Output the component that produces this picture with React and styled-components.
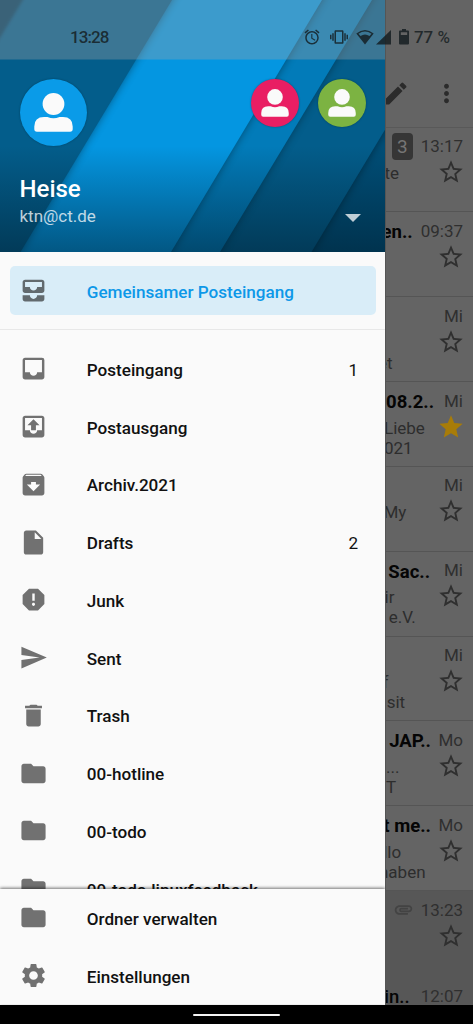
import React from 'react'
import styled, { createGlobalStyle } from 'styled-components'
import {
  MdInbox,
  MdArchive,
  MdInsertDriveFile,
  MdReport,
  MdSend,
  MdDelete,
  MdFolder,
  MdSettings,
  MdStar,
  MdStarBorder,
  MdMoreVert,
  MdEdit,
  MdAttachment,
  MdAlarm,
  MdVibration,
} from 'react-icons/md'

const GlobalStyle = createGlobalStyle`
* {
  box-sizing: border-box;
}
body {
  margin: 0;
  background: #000;
  font-family: Roboto, "Liberation Sans", sans-serif;
}
`

const Screen = styled.div`
  position: relative;
  width: 473px;
  height: 1024px;
  display: flex;
  flex-direction: column;
  overflow: hidden;
  background: #000;
`

const Main = styled.div`
  display: flex;
  height: 1004.5px;
  overflow: hidden;
`

/* ---------- status bar ---------- */

const StatusBar = styled.div`
  position: absolute;
  top: 0;
  left: 0;
  width: 100%;
  height: 59.5px;
  display: flex;
  align-items: center;
  justify-content: space-between;
  padding: 15px 23px 0 70px;
  color: rgba(20, 28, 32, 0.82);
  font-size: 17px;
  z-index: 2;
`

const Clock = styled.span`
  font-size: 17px;
  font-weight: 500;
  letter-spacing: -0.9px;
`

const StatusIcons = styled.div`
  display: flex;
  align-items: center;
  height: 20px;
`

const StatusIcon = styled.svg`
  display: block;
  flex: none;
  width: ${({ $w }) => $w}px;
  height: 18px;
  margin-right: ${({ $gap }) => $gap || 0}px;
`

const Percent = styled.span`
  font-weight: 500;
`

/* ---------- drawer ---------- */

const Drawer = styled.div`
  width: 385px;
  flex: none;
  display: flex;
  flex-direction: column;
  background: #fafafa;
`

const Header = styled.div`
  position: relative;
  height: 252px;
  flex: none;
  display: flex;
  flex-direction: column;
  padding: 79px 19px 0 19.5px;
  overflow: hidden;
`

const Backdrop = styled.svg`
  position: absolute;
  inset: 0;
  width: 100%;
  height: 100%;
`

const Avatars = styled.div`
  position: relative;
  display: flex;
  align-items: flex-start;
  height: 67px;
  gap: 19.5px;
`

const Avatar = styled.div`
  width: ${({ $size }) => $size}px;
  height: ${({ $size }) => $size}px;
  border-radius: 50%;
  background: ${({ $color }) => $color};
  box-shadow: 0 0 2px rgba(0, 0, 0, 0.35);
  margin-right: ${({ $push }) => ($push ? 'auto' : 0)};

  svg {
    display: block;
    width: 100%;
    height: 100%;
  }
`

const Account = styled.div`
  position: relative;
  display: flex;
  justify-content: space-between;
  align-items: flex-end;
  margin-top: 29px;
  padding-right: 5px;
`

const Name = styled.div`
  font-size: 24px;
  line-height: 28px;
  font-weight: 500;
  color: #fff;
`

const Email = styled.div`
  font-size: 17px;
  line-height: 20px;
  margin-top: 3px;
  margin-bottom: 1px;
  color: rgba(255, 255, 255, 0.75);
`

const Caret = styled.span`
  border: 8.5px solid transparent;
  border-top-color: rgba(255, 255, 255, 0.75);
  border-bottom: 0;
  margin-bottom: 5px;
`

const Unified = styled.div`
  flex: none;
  height: 78px;
  padding: 14px 9.5px;
  border-bottom: 1px solid #e8e8e8;
`

const List = styled.div`
  flex: 1;
  min-height: 0;
  overflow: hidden;
  padding-top: 11px;
`

const Row = styled.div`
  height: ${({ $active }) => ($active ? '48.5px' : '57.75px')};
  display: flex;
  align-items: center;
  padding: ${({ $active }) => ($active ? '3px 17px 0 9.75px' : '0 27px 0 19.25px')};
  border-radius: 5px;
  background: ${({ $active }) => ($active ? '#d9edf8' : 'transparent')};
  color: ${({ $active }) => ($active ? '#0d98e8' : '#111')};
  font-size: 17.1px;
  font-weight: 500;
  white-space: nowrap;

  > svg {
    width: 29px;
    height: 29px;
    margin-right: 38.5px;
    margin-top: ${({ $active }) => ($active ? -3 : -2)}px;
    flex: none;
    color: ${({ $active }) => ($active ? '#626a6e' : '#717171')};
  }
`

const Count = styled.span`
  margin-left: auto;
  font-weight: 400;
`

const Footer = styled.div`
  position: relative;
  flex: none;
  height: 115.5px;
  padding-top: 1px;
  background: #fafafa;
  box-shadow: 0 -1px 3px rgba(0, 0, 0, 0.55);
  clip-path: inset(-6px 0 0 0);
`

/* ---------- dimmed message list ---------- */

const Mails = styled.div`
  flex: 1;
  min-width: 0;
  background: #646464;
  border-left: 1px solid #555;
  overflow: hidden;
`

const Toolbar = styled.div`
  height: 127.5px;
  padding: 60px 12px 0 0;
  display: flex;
  align-items: center;
  justify-content: flex-end;
  gap: 22px;
  color: #2b2b2b;
  border-bottom: 1px solid #595959;

  svg {
    width: 29px;
    height: 29px;
    flex: none;
  }
`

const Mail = styled.div`
  height: 84.85px;
  padding: ${({ $low }) => ($low ? 8 : 6.5)}px 10px 0 0;
  background: ${({ $dark }) => ($dark ? '#575757' : 'transparent')};
  border-bottom: 1px solid ${({ $dark }) => ($dark ? '#575757' : '#555')};
`

const MailTop = styled.div`
  display: flex;
  align-items: center;
  justify-content: flex-end;
  height: 24px;
`

const Subject = styled.span`
  font-size: 18.5px;
  font-weight: ${({ $read }) => ($read ? 500 : 700)};
  color: #050505;
  white-space: nowrap;
  margin-right: ${({ $gap }) => $gap || 9}px;
  padding-top: 3px;
`

const Time = styled.span`
  font-size: 17px;
  color: #2f2f2f;
`

const Badge = styled.span`
  width: 20.5px;
  height: 27px;
  margin-right: 8px;
  display: flex;
  align-items: center;
  justify-content: center;
  border-radius: 4px;
  background: #363636;
  color: #757575;
  font-size: 19px;
`

const Clip = styled(MdAttachment)`
  width: 21px;
  height: 21px;
  margin-right: 7px;
  color: #434343;
`

const MailBody = styled.div`
  display: flex;
  justify-content: space-between;
`

const Preview = styled.div`
  width: 52px;
  font-size: 17px;
  line-height: 20px;
  color: #2d2d2d;
  white-space: pre;
  padding-top: 5px;
  margin-left: ${({ $shift }) => $shift || 0}px;
`

const Star = styled.span`
  color: ${({ $on }) => ($on ? '#a87c08' : '#2f2f2f')};
  margin-right: -2px;

  svg {
    display: block;
    width: 28px;
    height: 28px;
  }
`

/* ---------- system navigation ---------- */

const NavBar = styled.div`
  flex: 1;
  display: flex;
  justify-content: center;
  align-items: center;
`

const Pill = styled.div`
  width: 87px;
  height: 2.5px;
  margin-top: 1px;
  border-radius: 2px;
  background: #f5f5f5;
`

const AllInbox = () => (
  <svg viewBox="0 0 24 24" fill="currentColor">
    <path d="M19 3H5c-1.100 0-2 .9-2 2v7c0 1.100.9 2 2 2h14c1.100 0 2-.9 2-2V5c0-1.100-.9-2-2-2zm0 6h-4c0 1.620-1.380 3-3 3s-3-1.380-3-3H5V5h14v4zm-4 7h6v3c0 1.100-.9 2-2 2H5c-1.100 0-2-.9-2-2v-3h6c0 1.660 1.340 3 3 3s3-1.340 3-3z" />
  </svg>
)

const Outbox = () => (
  <svg viewBox="0 0 24 24" fill="currentColor">
    <path d="M19 3H5c-1.100 0-2 .9-2 2v14c0 1.100.9 2 2 2h14c1.100 0 2-.9 2-2V5c0-1.100-.9-2-2-2zm0 12h-4c0 1.660-1.350 3-3 3s-3-1.340-3-3H5V5h14v10zM7 11h3v4h4v-4h3l-5-5z" />
  </svg>
)

const Person = () => (
  <svg viewBox="0 0 67 67" fill="#fafafa">
    <circle cx="33.5" cy="25" r="10.900" />
    <path d="M14.300 50V47.500Q14.300 38 24 38H27.500Q33.500 40.600 39.500 38H43Q52.700 38 52.700 47.500V50Q52.700 52.700 50 52.700H17Q14.300 52.700 14.300 50Z" />
  </svg>
)

const HeaderArt = () => (
  <Backdrop viewBox="0 0 385 252" preserveAspectRatio="none">
    <defs>
      <linearGradient id="fade" x1="0" y1="0" x2="0" y2="1">
        <stop offset="0.58" stopColor="#001826" stopOpacity="0" />
        <stop offset="1" stopColor="#001826" stopOpacity="0.5" />
      </linearGradient>
      <filter id="soft" x="-20%" y="-20%" width="140%" height="140%">
        <feGaussianBlur stdDeviation="4.5" />
      </filter>
      <filter id="edge" x="-20%" y="-20%" width="140%" height="140%">
        <feGaussianBlur stdDeviation="1.5" />
      </filter>
    </defs>
    <rect width="386" height="252" fill="#004e77" />
    <path d="M-200 -10H469L306 262H-200Z" fill="#000" opacity="0.4" filter="url(#soft)" />
    <path d="M-200 0H463L311.500 252H-200Z" fill="#035d8b" />
    <path d="M-200 -10H378L214 262H-200Z" fill="#000" opacity="0.35" filter="url(#soft)" />
    <path d="M-200 0H372L220 252H-200Z" fill="#027bb9" />
    <path d="M-200 -10H328L165 262H-200Z" fill="#000" opacity="0.4" filter="url(#soft)" />
    <path d="M-200 0H322L171 252H-200Z" fill="#0496e1" />
    <path d="M-200 -10H178L14 262H-200Z" fill="#000" opacity="0.4" filter="url(#soft)" />
    <path d="M-200 0H172L20.500 252H-200Z" fill="#035d8b" />
    <path d="M-40 -20H35L-40 104Z" fill="#002c44" opacity="0.6" filter="url(#edge)" />
    <rect width="386" height="252" fill="url(#fade)" />
    <rect width="386" height="59.5" fill="#a6a6a6" opacity="0.35" />
  </Backdrop>
)

const folders = [
  { label: 'Posteingang', icon: MdInbox, count: 1 },
  { label: 'Postausgang', icon: Outbox },
  { label: 'Archiv.2021', icon: MdArchive },
  { label: 'Drafts', icon: MdInsertDriveFile, count: 2 },
  { label: 'Junk', icon: MdReport },
  { label: 'Sent', icon: MdSend },
  { label: 'Trash', icon: MdDelete },
  { label: '00-hotline', icon: MdFolder },
  { label: '00-todo', icon: MdFolder },
  { label: '00-todo.linuxfeedback', icon: MdFolder },
]

const mails = [
  { time: '13:17', badge: 3, preview: 'te', shift: -1.5 },
  { time: '09:37', subject: 'en..', gap: 8, preview: '' },
  { time: 'Mi', preview: '\net', shift: -8 },
  { time: 'Mi', subject: '08.2..', gap: 10, preview: 'Liebe\n021', starred: true, shift: -2 },
  { time: 'Mi', preview: 'My', shift: -2.5 },
  { time: 'Mi', subject: 'Sac..', gap: 14, preview: 'ir\n e.V.', shift: -1.5 },
  { time: 'Mi', preview: 'f\nisit', shift: -3.5 },
  { time: 'Mo', subject: 'JAP..', gap: 7.5, preview: '...\nT' },
  { time: 'Mo', subject: 't me..', gap: 7.5, preview: ' llo\nhaben', shift: -7 },
  { time: '13:23', clip: true, preview: '', dark: true },
  { time: '12:07', subject: 'in..', gap: 11, preview: '', dark: true, low: true, read: true },
]

const App = () => {
  return (
    <Screen>
      <GlobalStyle />
      <Main>
        <Drawer>
          <Header>
            <HeaderArt />
            <Avatars>
              <Avatar $size={67} $color="#0a9be8" $push><Person /></Avatar>
              <Avatar $size={48} $color="#e91e63"><Person /></Avatar>
              <Avatar $size={48} $color="#7cb342"><Person /></Avatar>
            </Avatars>
            <Account>
              <div>
                <Name>Heise</Name>
                <Email>ktn@ct.de</Email>
              </div>
              <Caret />
            </Account>
          </Header>
          <Unified>
            <Row $active>
              <AllInbox />
              Gemeinsamer Posteingang
            </Row>
          </Unified>
          <List>
            {folders.map(({ label, icon: Icon, count }) => (
              <Row key={label}>
                <Icon />
                {label}
                {count && <Count>{count}</Count>}
              </Row>
            ))}
          </List>
          <Footer>
            <Row><MdFolder />Ordner verwalten</Row>
            <Row><MdSettings />Einstellungen</Row>
          </Footer>
        </Drawer>
        <Mails>
          <Toolbar>
            <MdEdit />
            <MdMoreVert />
          </Toolbar>
          {mails.map((mail, i) => (
            <Mail key={i} $dark={mail.dark} $low={mail.low}>
              <MailTop>
                {mail.subject && <Subject $gap={mail.gap} $read={mail.read}>{mail.subject}</Subject>}
                {mail.badge && <Badge>{mail.badge}</Badge>}
                {mail.clip && <Clip />}
                <Time>{mail.time}</Time>
              </MailTop>
              <MailBody>
                <Preview $shift={mail.shift}>{mail.preview}</Preview>
                <Star $on={mail.starred}>{mail.starred ? <MdStar /> : <MdStarBorder />}</Star>
              </MailBody>
            </Mail>
          ))}
        </Mails>
      </Main>
      <StatusBar>
        <Clock>13:28</Clock>
        <StatusIcons>
          <StatusIcon as={MdAlarm} $w={18} $gap={9} />
          <StatusIcon as={MdVibration} $w={18} $gap={8} />
          <StatusIcon $w={18} $gap={2} viewBox="0 0 18 18" fill="currentColor">
            <path fillRule="evenodd" d="M9 16.500L0.300 5.500Q9 -1.500 17.700 5.500ZM2.500 5.800L4.500 8Q9 4.800 13.500 8L15.500 5.800Q9 1.200 2.500 5.800Z" />
          </StatusIcon>
          <StatusIcon $w={15} $gap={8} viewBox="0 0 15 18" fill="currentColor">
            <path d="M15 2V16.500H0Z" />
          </StatusIcon>
          <StatusIcon $w={10} $gap={5} viewBox="0 0 10 18" fill="currentColor">
            <path fillRule="evenodd" d="M3 1H7V2.500H9Q10 2.500 10 3.500V15.500Q10 16.500 9 16.500H1Q0 16.500 0 15.500V3.500Q0 2.500 1 2.500H3ZM1.800 4.300V7H8.200V4.300Z" />
          </StatusIcon>
          <Percent>77 %</Percent>
        </StatusIcons>
      </StatusBar>
      <NavBar>
        <Pill />
      </NavBar>
    </Screen>
  )
}

export default App
